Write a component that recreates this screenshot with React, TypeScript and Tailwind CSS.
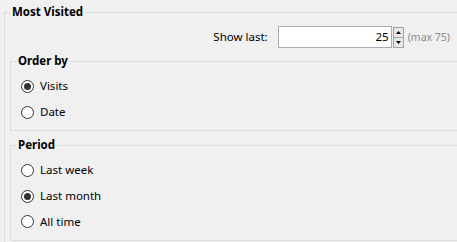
import React, { useState } from 'react';

const font = { fontFamily: '"Noto Sans", "Open Sans", sans-serif' };

const Radio = ({ checked }: { checked: boolean }) => (
  <svg width="13" height="13" viewBox="0 0 13 13" className="shrink-0">
    <circle cx="6.5" cy="6.5" r="6" fill="#ffffff" stroke="#333333" strokeWidth="1" />
    {checked && <circle cx="6.5" cy="6.5" r="3.5" fill="#333333" />}
  </svg>
);

const RadioRow = ({
  label,
  checked,
  onSelect,
  h = 'h-[26px]',
}: {
  label: string;
  checked: boolean;
  onSelect: () => void;
  h?: string;
}) => (
  <label className={`flex items-center gap-[6px] cursor-default ${h}`} onClick={onSelect}>
    <Radio checked={checked} />
    <span className="text-[11.5px] leading-[16px] text-black">{label}</span>
  </label>
);

const Spinner = () => (
  <div className="flex flex-col h-[21px] w-[11px] ml-[1px]">
    <div className="flex-1 flex items-center justify-center border border-[#a3a3a3] bg-[#e8e8e8]">
      <svg width="5" height="3" viewBox="0 0 5 3">
        <path d="M0 3 L2.5 0 L5 3 Z" fill="#000" />
      </svg>
    </div>
    <div className="flex-1 flex items-center justify-center border border-t-0 border-[#a3a3a3] bg-[#e8e8e8]">
      <svg width="5" height="3" viewBox="0 0 5 3">
        <path d="M0 0 L5 0 L2.5 3 Z" fill="#000" />
      </svg>
    </div>
  </div>
);

export default function App() {
  const [order, setOrder] = useState('visits');
  const [period, setPeriod] = useState('month');

  return (
    <div className="w-[457px] h-[242px] overflow-hidden bg-[#f0f0f0] pt-[4px] pl-[4px]" style={font}>
      <fieldset className="w-[470px] border border-[#dcdcdc] px-0 pb-[10px]">
        <legend className="ml-[5px] px-[2px] font-bold text-[11.5px] leading-[16px] text-black">
          Most Visited
        </legend>
        <div className="flex flex-col pl-[5px]">
          <div className="flex items-center justify-end pr-[23px] mt-[6px]">
            <span className="text-[11.5px] leading-[16px] text-black mr-[10px]">Show last:</span>
            <div className="w-[114px] h-[22px] border border-[#ababab] bg-white flex items-center justify-end pr-[2px]">
              <span className="text-[11.5px] leading-[16px] text-black">25</span>
            </div>
            <Spinner />
            <span className="ml-[4px] text-[10.5px] leading-[16px] text-[#8c8c8c]">(max 75)</span>
          </div>

          <fieldset className="mt-[5px] border border-[#dcdcdc] px-0 pb-[5px]">
            <legend className="ml-[5px] px-[2px] font-bold text-[11.5px] leading-[16px] text-black">
              Order by
            </legend>
            <div className="flex flex-col pl-[10px] pt-[4px]">
              <RadioRow label="Visits" checked={order === 'visits'} onSelect={() => setOrder('visits')} />
              <RadioRow label="Date" checked={order === 'date'} onSelect={() => setOrder('date')} />
            </div>
          </fieldset>

          <fieldset className="mt-[6px] border border-[#dcdcdc] px-0 pb-[6px]">
            <legend className="ml-[5px] px-[2px] font-bold text-[11.5px] leading-[16px] text-black">
              Period
            </legend>
            <div className="flex flex-col pl-[10px] pt-[4px]">
              <RadioRow label="Last week" checked={period === 'week'} onSelect={() => setPeriod('week')} />
              <RadioRow label="Last month" checked={period === 'month'} onSelect={() => setPeriod('month')} />
              <RadioRow label="All time" h="h-[25px]" checked={period === 'all'} onSelect={() => setPeriod('all')} />
            </div>
          </fieldset>
        </div>
      </fieldset>
    </div>
  );
}
